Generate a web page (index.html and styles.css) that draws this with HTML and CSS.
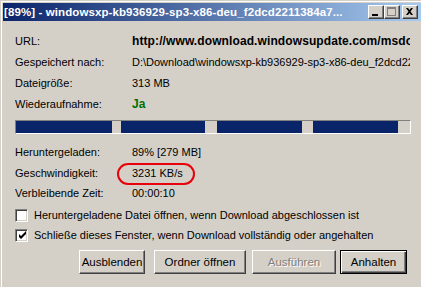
FILE: index.html
```html
<!DOCTYPE html>
<html>
<head>
<meta charset="utf-8">
<link rel="stylesheet" href="styles.css">
</head>
<body>
<div class="window">
  <div class="titlebar">
    <span class="title">[89%] - windowsxp-kb936929-sp3-x86-deu_f2dcd2211384a7...</span>
    <div class="tbtns">
      <span class="tbtn"><svg width="14" height="12" viewBox="0 0 14 12"><rect x="3" y="8" width="6" height="2" fill="#000"/></svg></span>
      <span class="tbtn"><svg width="14" height="12" viewBox="0 0 14 12"><rect x="2.5" y="1.5" width="8" height="8" fill="none" stroke="#808080"/><rect x="2" y="1" width="9" height="2" fill="#808080"/></svg></span>
      <span class="tbtn close"><svg width="14" height="12" viewBox="0 0 14 12"><path d="M3 2h2l1.5 2 1.5-2h2l-2.5 3.5 2.5 3.5h-2l-1.5-2-1.5 2h-2l2.5-3.5z" fill="#000"/></svg></span>
    </div>
  </div>
  <div class="content">
    <div class="info">
      <span class="lbl">URL:</span><span class="val bold clip">http://www.download.windowsupdate.com/msdownload/update/software/svpk/2008/04/windowsxp-kb936929-sp3-x86-deu_f2dcd2211384a7</span>
      <span class="lbl">Gespeichert nach:</span><span class="val clip">D:\Download\windowsxp-kb936929-sp3-x86-deu_f2dcd2211384a7.exe</span>
      <span class="lbl">Dateigröße:</span><span class="val">313 MB</span>
      <span class="lbl">Wiederaufnahme:</span><span class="val bold green">Ja</span>
    </div>
    <div class="progress">
      <span class="blk b1"></span><span class="blk b2"></span><span class="blk b3"></span><span class="blk b4"></span>
    </div>
    <div class="info stats">
      <span class="lbl">Heruntergeladen:</span><span class="val">89% [279 MB]</span>
      <span class="lbl">Geschwindigkeit:</span><span class="val speed">3231 KB/s<span class="ring"></span></span>
      <span class="lbl">Verbleibende Zeit:</span><span class="val">00:00:10</span>
    </div>
    <div class="checks">
      <label class="chk"><span class="box"></span>Heruntergeladene Datei öffnen, wenn Download abgeschlossen ist</label>
      <label class="chk"><span class="box"><svg width="9" height="9" viewBox="0 0 9 9"><path d="M1 3v3l2 2 5-5V0L3 5z" fill="#000"/></svg></span>Schließe dieses Fenster, wenn Download vollständig oder angehalten</label>
    </div>
    <div class="buttons">
      <span class="btn w1">Ausblenden</span>
      <span class="btn w2">Ordner öffnen</span>
      <span class="btn w3 disabled">Ausführen</span>
      <span class="btn w4 default">Anhalten</span>
    </div>
  </div>
</div>
</body>
</html>
```
FILE: styles.css
```css
html, body {
  margin: 0;
  padding: 0;
  background: #d4d0c8;
}
body {
  width: 421px;
  height: 287px;
  overflow: hidden;
  font-family: "Liberation Sans", Arial, sans-serif;
  font-size: 11px;
  color: #000;
}
.window {
  height: 287px;
  box-sizing: border-box;
  border-top: 1px solid #fff;
  border-left: 1px solid #fff;
  margin-top: 1px;
  margin-left: 1px;
  padding: 1px 0 0 1px;
}
.titlebar {
  height: 18px;
  background: linear-gradient(to right, #0a246a 0%, #a6caf0 100%);
  display: flex;
  align-items: center;
  justify-content: space-between;
}
.title {
  color: #fff;
  font-weight: bold;
  font-size: 11.5px;
  padding-left: 1px;
  white-space: nowrap;
  letter-spacing: 0.1px;
}
.tbtns {
  display: flex;
  align-items: center;
  padding-right: 3px;
}
.tbtn {
  width: 16px;
  height: 14px;
  box-sizing: border-box;
  background: #d4d0c8;
  border-top: 1px solid #fff;
  border-left: 1px solid #fff;
  border-right: 1px solid #404040;
  border-bottom: 1px solid #404040;
  box-shadow: inset -1px -1px 0 #808080;
  display: flex;
}
.tbtn svg { display: block; }
.tbtn.close { margin-left: 2px; }
.content {
  padding: 9px 0 0 12px;
}
.info {
  display: grid;
  grid-template-columns: 117px 278px;
  grid-auto-rows: 21px;
  align-items: center;
}
.lbl { white-space: nowrap; }
.val { white-space: nowrap; min-width: 0; }
.clip { display: block; width: 278px; max-width: 278px; overflow: hidden; }
.bold { font-weight: bold; }
.info .bold.clip { font-size: 12px; letter-spacing: 0.1px; }
.green { color: #007000; font-size: 12px; }
.progress {
  margin-top: 6px;
  width: 396px;
  height: 14px;
  box-sizing: border-box;
  border-top: 1px solid #808080;
  border-left: 1px solid #808080;
  border-right: 1px solid #fff;
  border-bottom: 1px solid #fff;
  padding: 0 0 1px 0;
  display: flex;
}
.blk {
  height: 12px;
  background: #0a246a;
}
.b1 { width: 96px; }
.b2 { width: 84px; margin-left: 9px; }
.b3 { width: 85px; margin-left: 12px; }
.b4 { width: 85px; margin-left: 11px; }
.stats { margin-top: 8px; grid-auto-rows: 20.5px; }
.speed { position: relative; overflow: visible; }
.ring {
  position: absolute;
  left: -15px;
  top: -4px;
  width: 74px;
  height: 18px;
  border: 2px solid #e8000b;
  border-radius: 11px;
}
.checks {
  margin-top: 5px;
  display: flex;
  flex-direction: column;
  gap: 7px;
}
.chk {
  display: flex;
  align-items: center;
  gap: 6px;
  height: 13px;
  white-space: nowrap;
}
.box {
  width: 13px;
  height: 13px;
  box-sizing: border-box;
  background: #fff;
  border-top: 1px solid #808080;
  border-left: 1px solid #808080;
  border-right: 1px solid #fff;
  border-bottom: 1px solid #fff;
  box-shadow: inset 1px 1px 0 #404040, inset -1px -1px 0 #d4d0c8;
  display: flex;
  align-items: center;
  justify-content: center;
}
.box svg { display: block; margin-left: 1px; margin-top: 1px; }
.buttons {
  margin-top: 8px;
  padding-left: 64px;
  display: flex;
}
.btn {
  height: 24px;
  box-sizing: border-box;
  display: flex;
  align-items: center;
  justify-content: center;
  border-top: 1px solid #fff;
  border-left: 1px solid #fff;
  border-right: 1px solid #404040;
  border-bottom: 1px solid #404040;
  box-shadow: inset -1px -1px 0 #808080;
  white-space: nowrap;
  font-size: 11.5px;
}
.w1 { width: 66px; }
.w2 { width: 92px; margin-left: 9px; }
.w3 { width: 84px; margin-left: 6px; }
.w4 { width: 67px; margin-left: 4px; }
.disabled { color: #808080; text-shadow: 1px 1px 0 #fff; }
.default {
  border: 1px solid #000;
  box-shadow: inset 1px 1px 0 #fff, inset -1px -1px 0 #404040, inset -2px -2px 0 #808080;
}
```
